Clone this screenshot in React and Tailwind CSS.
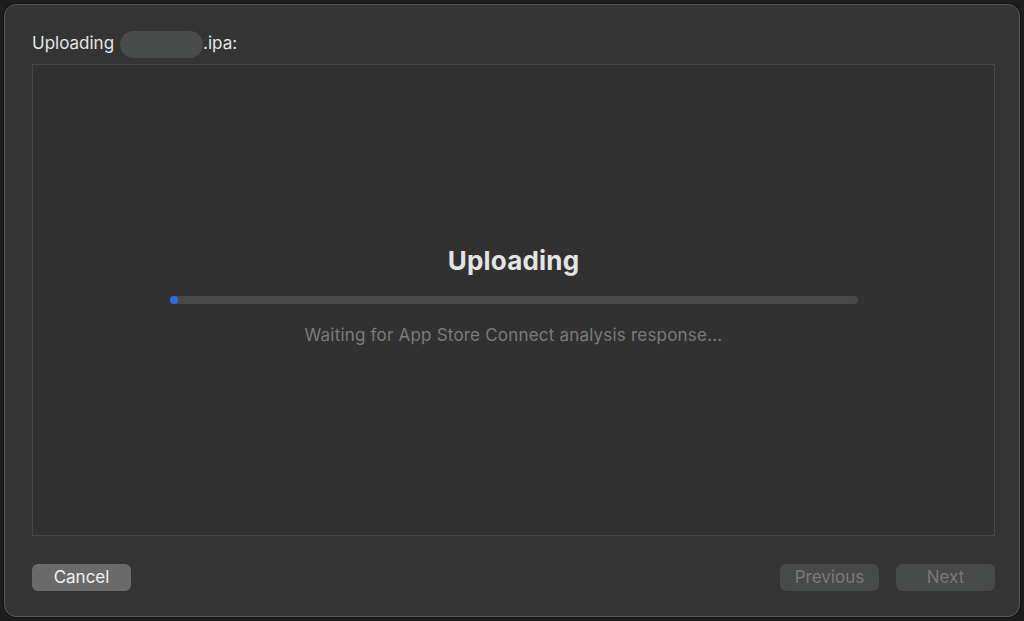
export default function App() {
  return (
    <div
      className="w-[1024px] h-[621px] bg-[#1d1d1d] pl-1 pr-[4px] py-1 overflow-hidden"
      style={{ fontFamily: 'Inter, "Noto Sans", sans-serif' }}
    >
      <div className="h-full rounded-[12px] border border-[#595a59] bg-[#333433] shadow-[0_0_0_1px_#111] flex flex-col pl-[27px] pr-[24px] pt-[29px] pb-[25px]">
        {/* Title */}
        <div className="flex items-center h-[20px] text-[17px] text-[#e6e6e6] mb-[10px]">
          <span>Uploading</span>
          <span className="inline-block w-[83px] h-[27px] rounded-full bg-[#4a4b4b] ml-[6px]" />
          <span>.ipa:</span>
        </div>

        {/* Content panel */}
        <div className="h-[472px] border border-[#474847] bg-[#313131] flex flex-col items-center pt-[180px]">
          <h1 className="text-[26px] font-bold text-[#e4e4e4] leading-[32px] tracking-[0.2px]">Uploading</h1>
          <div className="relative mt-[19px] w-[688px] h-[8px] rounded-full bg-[#484848]">
            <div className="absolute left-0 top-0 w-[8px] h-[8px] rounded-full bg-[#2f6be6]" />
          </div>
          <p className="mt-[21px] text-[17px] text-[#7b7b7b] leading-[20px] tracking-[0.2px]">
            Waiting for App Store Connect analysis response...
          </p>
        </div>

        {/* Footer buttons */}
        <div className="mt-auto flex items-center">
          <button className="w-[99px] h-[27px] rounded-[6px] bg-[#6a6a6a] text-[17px] text-[#f0f0f0]">
            Cancel
          </button>
          <div className="ml-auto flex gap-[17px]">
            <button className="w-[99px] h-[27px] rounded-[6px] bg-[#484949] text-[17px] text-[#7a7a7a]">
              Previous
            </button>
            <button className="w-[99px] h-[27px] rounded-[6px] bg-[#484949] text-[17px] text-[#7a7a7a]">
              Next
            </button>
          </div>
        </div>
      </div>
    </div>
  )
}
